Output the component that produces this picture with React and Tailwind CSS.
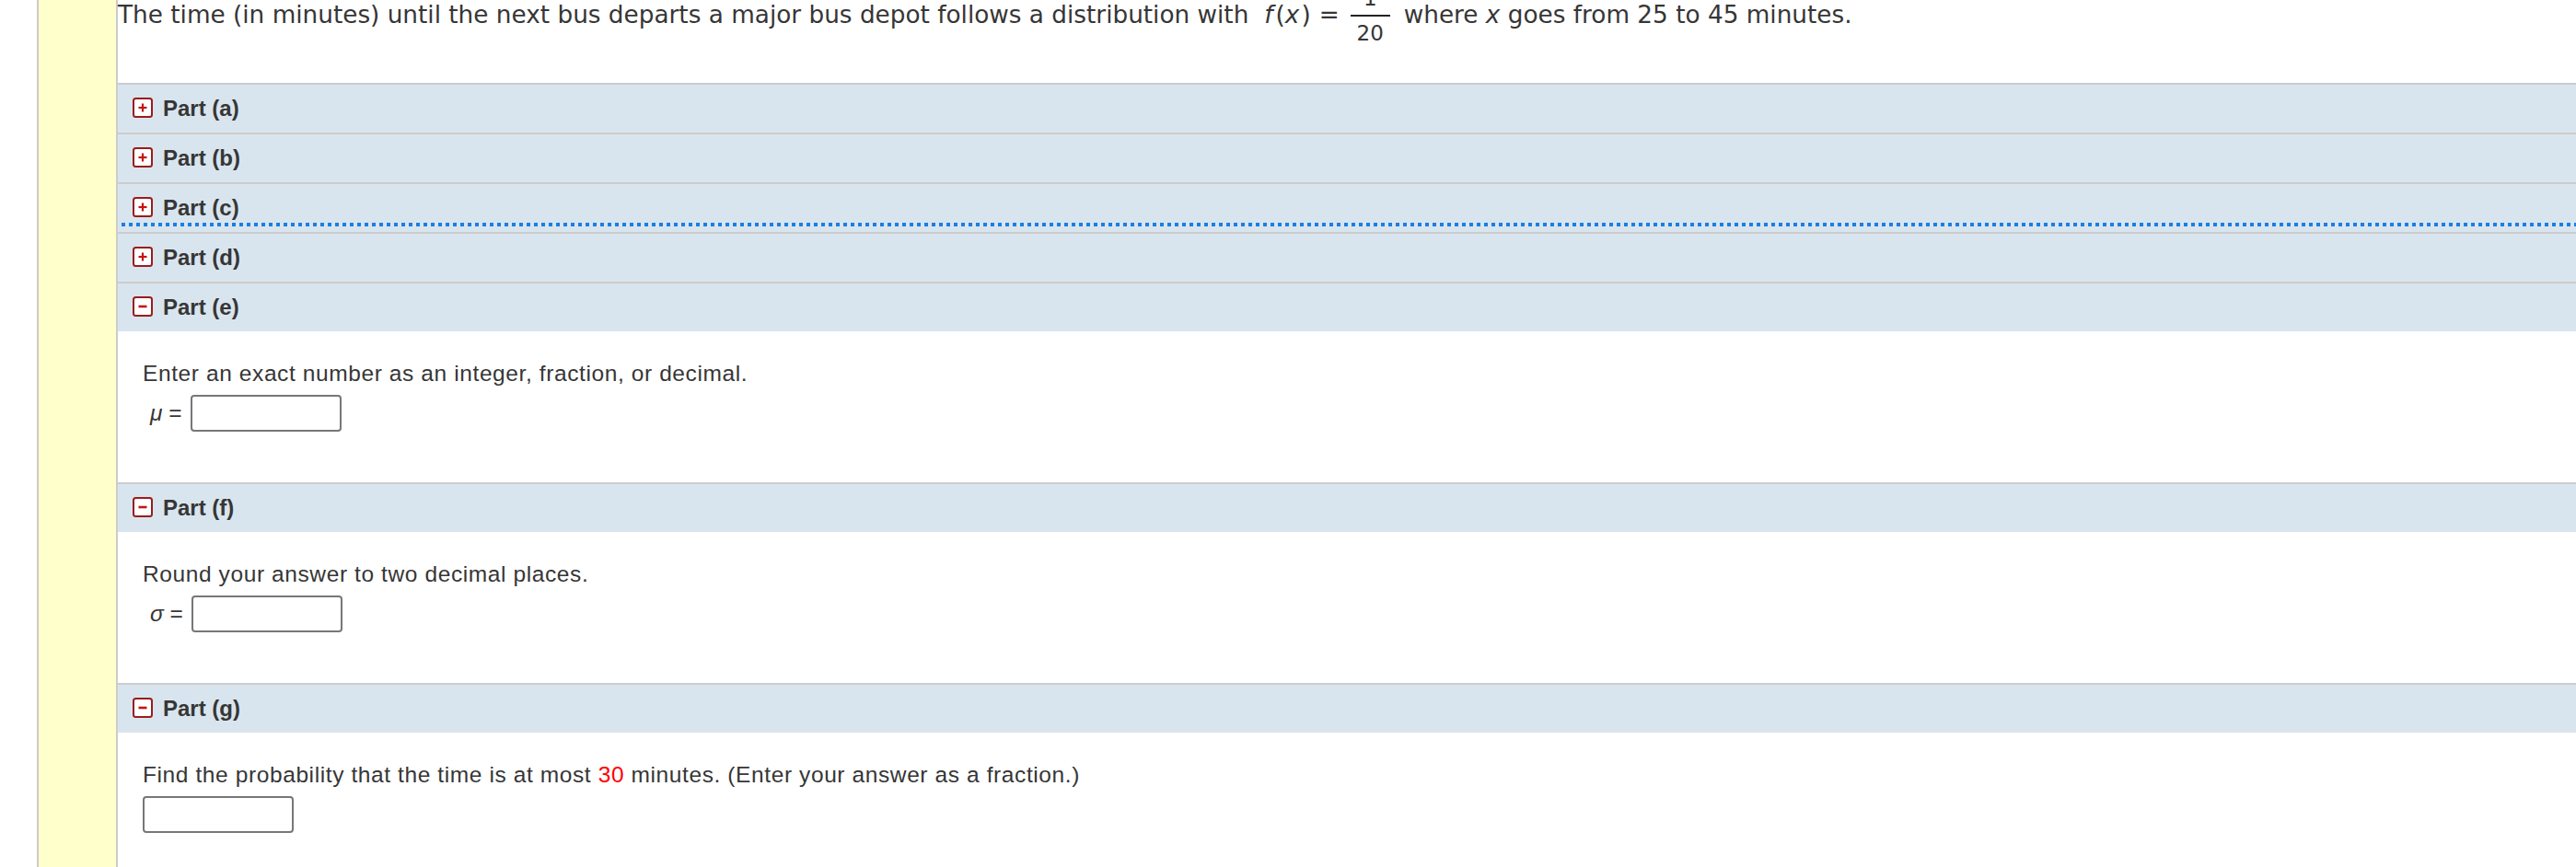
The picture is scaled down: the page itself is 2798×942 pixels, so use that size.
import React from 'react';

const PARTS_CLOSED = ['a', 'b', 'c', 'd'];

const Toggle = ({ open }) => (
  <svg width="22" height="22" viewBox="0 0 22 22" className="-mt-[3px] shrink-0">
    <rect x="1" y="1" width="20" height="20" rx="2.5" fill="#fff" stroke="#9a1c1c" strokeWidth="2" />
    {open ? (
      <line x1="6.5" y1="11" x2="15.5" y2="11" stroke="#c41414" strokeWidth="2.6" />
    ) : (
      <>
        <line x1="6.5" y1="11" x2="15.5" y2="11" stroke="#c41414" strokeWidth="2.2" />
        <line x1="11" y1="6.5" x2="11" y2="15.5" stroke="#c41414" strokeWidth="2.2" />
      </>
    )}
  </svg>
);

const PartHeader = ({ label, open, focused }) => (
  <div className="relative border-t-2 border-[#cccccc] bg-[#d9e5ee]">
    <div className="flex h-[52px] items-center gap-[11px] pl-[16px]">
      <Toggle open={open} />
      <span className="text-[24px] font-bold text-[#363636]">Part ({label})</span>
    </div>
    {focused && (
      <span className="absolute bottom-[6px] left-[4px] right-0 h-[4px] bg-[repeating-linear-gradient(to_right,#1a7fe2_0px,#1a7fe2_4px,transparent_4px,transparent_8px)]" />
    )}
  </div>
);

const Answer = ({ symbol }) => (
  <div className={`mt-[10px] flex items-center ${symbol ? 'pl-[8px]' : ''}`}>
    {symbol && (
      <span className="mr-[9px] tracking-normal">
        <i>{symbol}</i> =
      </span>
    )}
    <div className="h-[40px] w-[164px] rounded-[4px] border-2 border-[#777777] bg-white" />
  </div>
);

const PartBody = ({ children }) => (
  <div className="bg-white pb-[55px] pl-[27px] pt-[33px] text-[24.5px] leading-[26px] tracking-[0.6px] text-[#363636]">
    {children}
  </div>
);

export default function App() {
  return (
    <div className="flex min-h-[942px] overflow-hidden bg-white font-['Liberation_Sans',Arial,sans-serif]">
      <div className="w-[40px] shrink-0" />
      <div className="w-[88px] shrink-0 border-x-2 border-[#cccccc] bg-[#ffffcc]" />

      <div className="flex-1">
        {/* question, page scrolled so the numerator is cut */}
        <div className="-mt-[15px] pb-[41px]">
          <div className="flex items-center font-['DejaVu_Sans',Verdana,sans-serif] text-[26.3px] text-[#363636]">
            <span>The time (in minutes) until the next bus departs a major bus depot follows a distribution with</span>
            <span className="ml-[17px]">
              <i>f</i>
              <span className="ml-[3px]">(</span>
              <i>x</i>
              <span className="ml-[2px]">)</span>
            </span>
            <span className="ml-[9px]">=</span>
            <span className="ml-[12px] inline-flex flex-col items-center text-[23px] leading-[26px]">
              <span className="pb-[5px]">1</span>
              <span className="h-[2px] w-[43px] bg-[#222]" />
              <span className="pt-[5px]">20</span>
            </span>
            <span className="ml-[15px]">
              where <i>x</i> goes from 25 to 45 minutes.
            </span>
          </div>
        </div>

        {PARTS_CLOSED.map((p) => (
          <PartHeader key={p} label={p} focused={p === 'c'} />
        ))}

        <PartHeader label="e" open />
        <PartBody>
          <div>Enter an exact number as an integer, fraction, or decimal.</div>
          <Answer symbol="μ" />
        </PartBody>

        <PartHeader label="f" open />
        <PartBody>
          <div>Round your answer to two decimal places.</div>
          <Answer symbol="σ" />
        </PartBody>

        <PartHeader label="g" open />
        <PartBody>
          <div>
            Find the probability that the time is at most <span className="text-[#ff0000]">30</span> minutes. (Enter your answer as a fraction.)
          </div>
          <Answer />
        </PartBody>
      </div>
    </div>
  );
}
